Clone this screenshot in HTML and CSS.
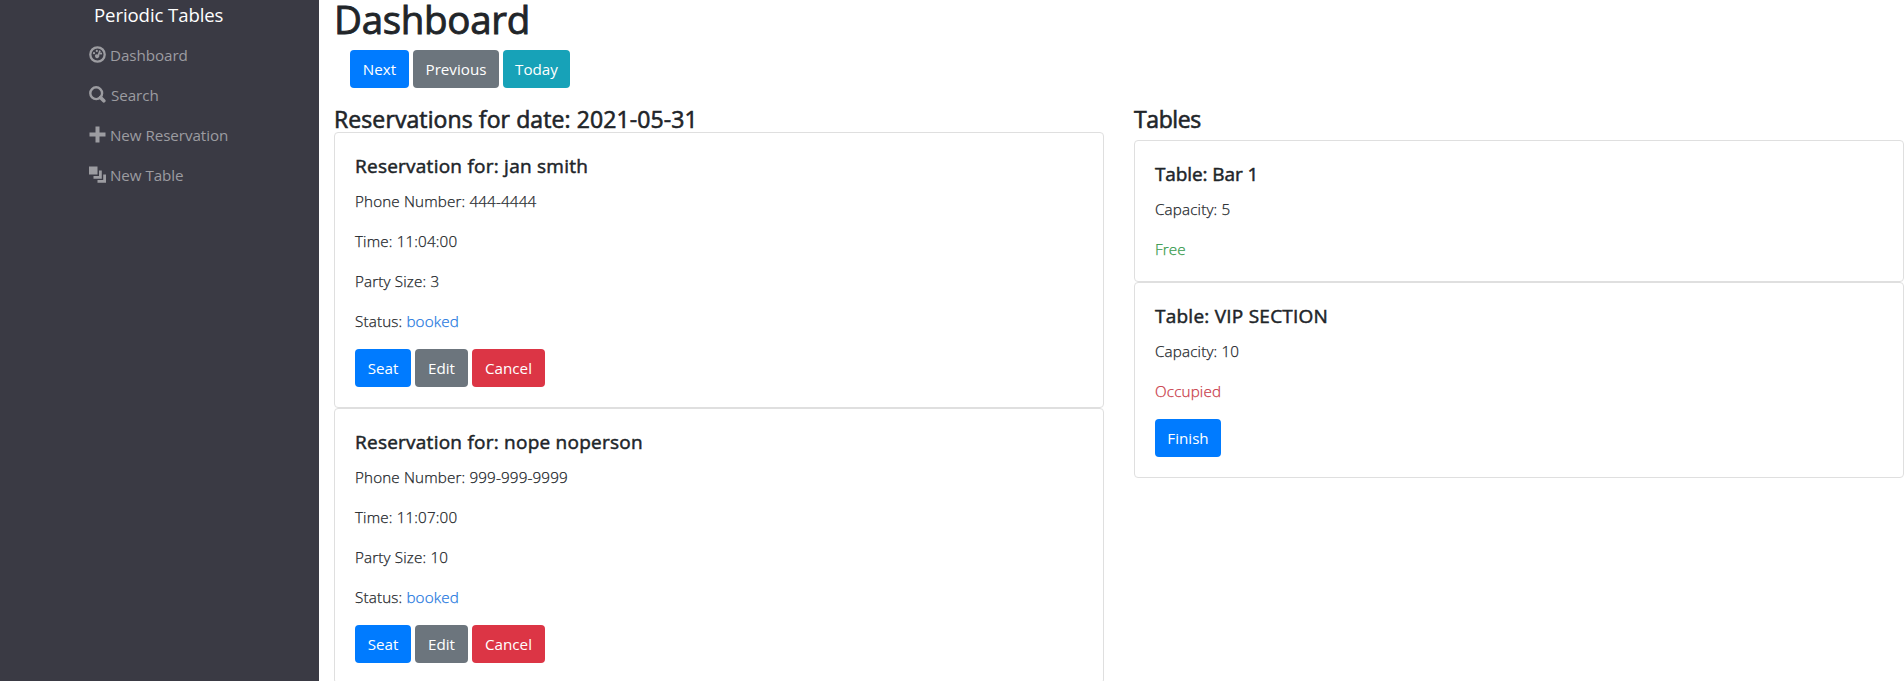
FILE: index.html
```html
<!DOCTYPE html>
<html lang="en">
<head>
<meta charset="utf-8">
<title>Periodic Tables</title>
<link rel="stylesheet" href="styles.css">
</head>
<body>
<div class="layout">
  <nav class="sidebar">
    <div class="brand">Periodic Tables</div>
    <ul class="menu">
      <li class="menu-item">
        <svg class="icon" viewBox="0 0 17 17"><circle cx="8.500" cy="8.500" r="7.200" fill="none" stroke="currentColor" stroke-width="2.300"/><circle cx="5" cy="7.200" r="1.100" fill="currentColor"/><circle cx="7.800" cy="4.900" r="1.100" fill="currentColor"/><circle cx="12" cy="7.600" r="1.100" fill="currentColor"/><path d="M10.200 4.200l1.600.8-1.500 4.500a2.200 2.200 0 1 1-3.500-1.300l2 .2z" fill="currentColor"/></svg>
        <span class="menu-text">Dashboard</span>
      </li>
      <li class="menu-item">
        <svg class="icon" viewBox="0 0 17 17"><circle cx="7.200" cy="7.200" r="5.900" fill="none" stroke="currentColor" stroke-width="2.400"/><path d="M11.500 11.500l3.300 3.300" stroke="currentColor" stroke-width="3.600" stroke-linecap="round"/></svg>
        <span class="menu-text t-search">Search</span>
      </li>
      <li class="menu-item">
        <svg class="icon" viewBox="0 0 17 17"><path d="M6.500 0.500h4v6h6v4h-6v6h-4v-6h-6v-4h6z" fill="currentColor"/></svg>
        <span class="menu-text">New Reservation</span>
      </li>
      <li class="menu-item">
        <svg class="icon" viewBox="0 0 17 17"><path d="M0 .5h8.500v8H0zM10 4.500h2.800v8.300H4.500V10H10zM14.200 8.500H17v8.300H8.500V14h5.700z" fill="currentColor"/></svg>
        <span class="menu-text">New Table</span>
      </li>
    </ul>
  </nav>
  <main class="main">
    <h1 class="page-title">Dashboard</h1>
    <div class="date-nav">
      <button class="btn primary b-next">Next</button>
      <button class="btn secondary b-prev">Previous</button>
      <button class="btn info b-today">Today</button>
    </div>
    <div class="columns">
      <section class="column">
        <h4 class="heading">Reservations for date: 2021-05-31</h4>
        <article class="card">
          <h5 class="card-title">Reservation for: jan smith</h5>
          <p class="card-text">Phone Number: 444-4444</p>
          <p class="card-text">Time: 11:04:00</p>
          <p class="card-text">Party Size: 3</p>
          <p class="card-text">Status: <span class="booked">booked</span></p>
          <div class="actions">
            <button class="btn primary b-seat">Seat</button>
            <button class="btn secondary b-edit">Edit</button>
            <button class="btn danger b-cancel">Cancel</button>
          </div>
        </article>
        <article class="card">
          <h5 class="card-title">Reservation for: nope noperson</h5>
          <p class="card-text">Phone Number: 999-999-9999</p>
          <p class="card-text">Time: 11:07:00</p>
          <p class="card-text">Party Size: 10</p>
          <p class="card-text">Status: <span class="booked">booked</span></p>
          <div class="actions">
            <button class="btn primary b-seat">Seat</button>
            <button class="btn secondary b-edit">Edit</button>
            <button class="btn danger b-cancel">Cancel</button>
          </div>
        </article>
      </section>
      <section class="column">
        <h4 class="heading spaced">Tables</h4>
        <article class="card">
          <h5 class="card-title tight">Table: Bar 1</h5>
          <p class="card-text">Capacity: 5</p>
          <p class="card-text free">Free</p>
        </article>
        <article class="card">
          <h5 class="card-title">Table: VIP SECTION</h5>
          <p class="card-text">Capacity: 10</p>
          <p class="card-text occupied">Occupied</p>
          <div class="actions"><button class="btn primary b-finish">Finish</button></div>
        </article>
      </section>
    </div>
  </main>
</div>
</body>
</html>
```
FILE: styles.css
```css
* { box-sizing: border-box; }
body {
  margin: 0;
  height: 681px;
  overflow: hidden;
  background: #fff;
  color: #212529;
  font: 400 15.2px/24px "Open Sans", "Noto Sans", sans-serif;
}
h1, h4, h5, p, ul { margin: 0; padding: 0; }
.layout { display: flex; height: 681px; overflow: hidden; }
.sidebar {
  flex: 0 0 319px;
  background: #3a3a44;
  padding-left: 89px;
}
.brand {
  height: 30px;
  padding-left: 5px;
  font-size: 18.6px;
  line-height: 30px;
  color: #fff;
  letter-spacing: -0.1px;
}
.menu {
  list-style: none;
  padding-top: 13px;
  color: #9c9ca1;
  display: flex;
  flex-direction: column;
  gap: 16px;
}
.menu-item { display: flex; height: 24px; gap: 4px; white-space: nowrap; }
.menu-text { letter-spacing: -0.07px; }
.icon { width: 17px; height: 17px; margin-top: 3px; flex: none; }
.t-search { padding-left: 1px; }
.main { flex: 1; padding-left: 15px; min-width: 0; }
.page-title {
  height: 42px;
  font-size: 38.5px;
  line-height: 38px;
  font-weight: 400;
  letter-spacing: -0.3px;
  -webkit-text-stroke: 0.9px currentColor;
}
.date-nav { display: flex; gap: 4px; padding: 8px 0 0 16px; }
.columns { display: flex; gap: 30px; padding-top: 15px; }
.column { flex: 1 1 0; min-width: 0; }
.heading {
  height: 29px;
  font-size: 23px;
  line-height: 32px;
  font-weight: 400;
  letter-spacing: 0.1px;
  white-space: nowrap;
  -webkit-text-stroke: 0.6px currentColor;
}
.spaced { margin-bottom: 8px; letter-spacing: -0.4px; }
.card { border: 1px solid #dfdfdf; border-radius: 4px; padding: 20px; }
.card-title {
  height: 24px;
  margin-bottom: 12px;
  font-size: 19px;
  line-height: 26px;
  font-weight: 400;
  letter-spacing: 0.24px;
  -webkit-text-stroke: 0.5px currentColor;
}
.tight { letter-spacing: -0.1px; }
.card-text {
  margin-bottom: 16px;
  font-weight: 300;
  letter-spacing: 0.16px;
  -webkit-text-stroke: 0.25px currentColor;
}
.card-text:last-child { margin-bottom: 0; }
.booked { color: #1f78e0; }
.free { color: #35994b; }
.occupied { color: #c93a48; }
.actions { display: flex; gap: 4px; }
.btn {
  height: 38px;
  border: 0;
  border-radius: 4px;
  padding: 0;
  color: #fff;
  font: inherit;
  text-align: center;
}
.primary { background: #007bff; }
.secondary { background: #6c757d; }
.info { background: #17a2b8; }
.danger { background: #dc3545; }
.b-next { width: 59px; }
.b-prev { width: 86px; }
.b-today { width: 67px; }
.b-seat { width: 56px; }
.b-edit { width: 53px; }
.b-cancel { width: 73px; }
.b-finish { width: 66px; }
```
